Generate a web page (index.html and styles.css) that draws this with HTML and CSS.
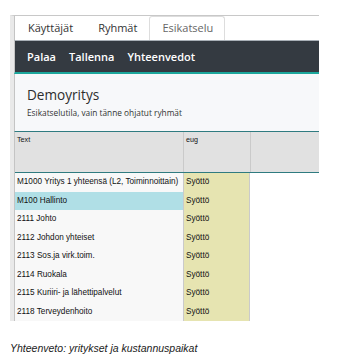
FILE: index.html
```html
<!DOCTYPE html>
<html lang="fi">
<head>
<meta charset="utf-8">
<link rel="stylesheet" href="styles.css">
</head>
<body>
<div class="frame">
  <div class="tabs">
    <span class="tab">Käyttäjät</span>
    <span class="tab">Ryhmät</span>
    <span class="tab active">Esikatselu</span>
  </div>
  <nav class="navbar">
    <span>Palaa</span>
    <span>Tallenna</span>
    <span>Yhteenvedot</span>
  </nav>
  <header class="title">
    <h1>Demoyritys</h1>
    <p>Esikatselutila, vain tänne ohjatut ryhmät</p>
  </header>
  <div class="grid">
    <div class="head">
      <div class="hc c1">Text</div>
      <div class="hc c2">eug</div>
      <div class="hc c3"></div>
    </div>
    <div class="row"><div class="c1">M1000 Yritys 1 yhteensä (L2, Toiminnoittain)</div><div class="c2">Syöttö</div></div>
    <div class="row sel"><div class="c1">M100 Hallinto</div><div class="c2">Syöttö</div></div>
    <div class="row"><div class="c1">2111 Johto</div><div class="c2">Syöttö</div></div>
    <div class="row"><div class="c1">2112 Johdon yhteiset</div><div class="c2">Syöttö</div></div>
    <div class="row"><div class="c1">2113 Sos.ja virk.toim.</div><div class="c2">Syöttö</div></div>
    <div class="row"><div class="c1">2114 Ruokala</div><div class="c2">Syöttö</div></div>
    <div class="row"><div class="c1">2115 Kuriiri- ja lähettipalvelut</div><div class="c2">Syöttö</div></div>
    <div class="row"><div class="c1">2118 Terveydenhoito</div><div class="c2">Syöttö</div></div>
  </div>
</div>
<p class="caption">Yhteenveto: yritykset ja kustannuspaikat</p>
</body>
</html>
```
FILE: styles.css
```css
html, body {
  margin: 0;
  padding: 0;
  background: #fff;
}
body {
  font-family: "Open Sans", "DejaVu Sans", sans-serif;
  color: #222;
}
.frame {
  margin: 15px 0 0 10px;
  width: 305px;
  border-top: 1px solid #c8c8c8;
  border-left: 4px solid #e9e9e9;
}
.tabs {
  display: flex;
  height: 24px;
  border-left: 1px solid #c4c4c4;
  background: #fff;
  align-items: flex-end;
}
.tab {
  font-size: 11px;
  color: #333;
  height: 24px;
  line-height: 24px;
  box-sizing: border-box;
}
.tab:nth-child(1) { margin-left: 13px; }
.tab:nth-child(2) { margin-left: 25px; }
.tab.active {
  margin-left: 12px;
  padding: 0 11px 0 12px;
  border: 1px solid #ddd;
  border-bottom: none;
  border-radius: 3px 3px 0 0;
  color: #666;
  line-height: 22px;
}
.navbar {
  display: flex;
  gap: 13px;
  height: 31px;
  align-items: center;
  padding: 0 0 0 12px;
  background: #343a41;
  border-top: 1px solid #a9b0b7;
  border-bottom: 2px solid #1ca79c;
  border-left: 1px solid #c4c4c4;
  color: #fff;
  font-size: 11px;
  font-weight: 600;
}
.title {
  background: #f7f8fa;
  border-left: 1px solid #c4c4c4;
  padding: 12px 0 0 12px;
  height: 45px;
}
.title h1 {
  margin: 0;
  font-size: 13.6px;
  font-weight: 400;
  color: #2d2d2d;
  line-height: 18px;
}
.title p {
  margin: 3px 0 0;
  font-size: 8.3px;
  color: #333;
  line-height: 12px;
}
.grid {
  border-top: 1px solid #2f7b80;
  font-family: "Liberation Sans", Arial, sans-serif;
  border-left: 1px solid #c4c4c4;
}
.head {
  display: flex;
  height: 40px;
  background: #e1e1e1;
  border-bottom: 1px solid #2f7b80;
}
.hc {
  font-size: 7.2px;
  padding: 3px 0 0 2px;
  color: #111;
  box-sizing: border-box;
}
.c1 { width: 168px; }
.c2 { width: 67px; border-left: 1px solid #cacaca; }
.hc.c3 { width: 65px; border-left: 1px solid #cacaca; }
.row {
  display: flex;
  height: 18.5px;
  font-size: 8.2px;
  line-height: 18.5px;
}
.row > div {
  box-sizing: border-box;
  padding-left: 2px;
  white-space: nowrap;
  overflow: hidden;
}
.row .c1 { background: #f8f8f8; color: #111; }
.row .c2 {
  background: #e6e4b1;
  border-right: 1px solid #cacaca;
  color: #111;
}
.row.sel .c1 { background: #b0dfe6; }
.caption {
  margin: 21px 0 0 10px;
  font-family: "Liberation Sans", Arial, sans-serif;
  font-style: italic;
  font-size: 10.5px;
  color: #222;
}
```
